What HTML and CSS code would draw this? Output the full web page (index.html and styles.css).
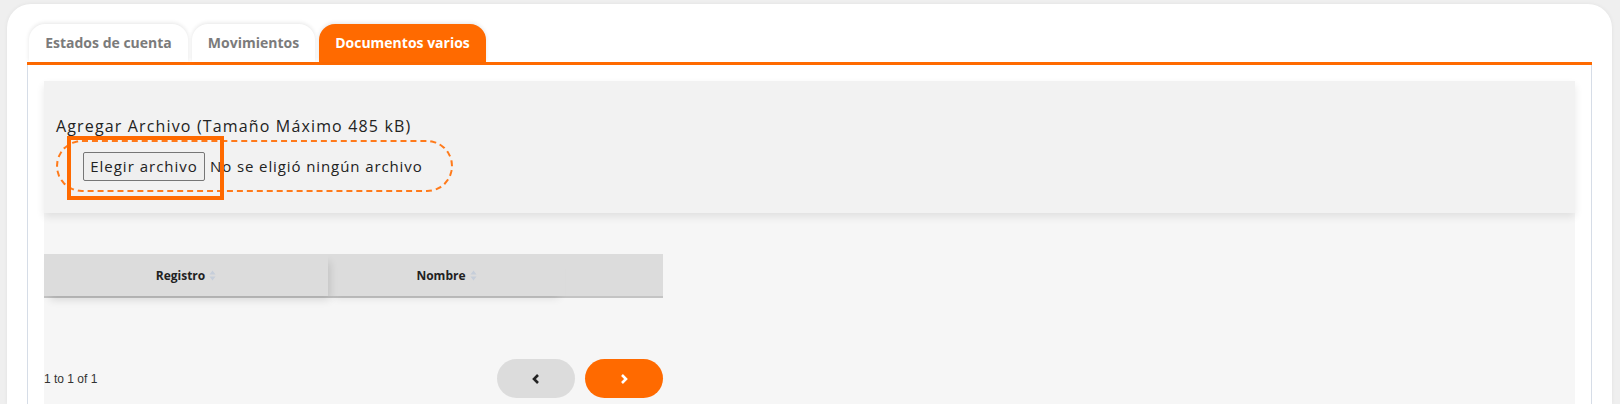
FILE: index.html
```html
<!DOCTYPE html>
<html lang="es">
<head>
<meta charset="utf-8">
<link rel="stylesheet" href="styles.css">
</head>
<body>
<div class="card">
  <div class="tabs">
    <div class="tab t1">Estados de cuenta</div>
    <div class="tab t2">Movimientos</div>
    <div class="tab t3 active">Documentos varios</div>
  </div>
  <div class="content">
    <div class="inner">
      <div class="upload">
        <div class="label">Agregar Archivo (Tamaño Máximo 485 kB)</div>
        <div class="drop">
          <span class="file-btn">Elegir archivo</span>
          <span class="file-name">No se eligió ningún archivo</span>
        </div>
        <div class="focus-box"></div>
      </div>
      <div class="table-area">
        <div class="thead">
          <div class="th th-reg">Registro <svg class="sort" width="7" height="11" viewBox="0 0 7 11"><path d="M3.5 0.5 L6.5 4.5 H0.5 Z M3.5 10.5 L6.5 6.5 H0.5 Z" fill="#c6ceda"/></svg></div>
          <div class="th th-nom">Nombre <svg class="sort" width="7" height="11" viewBox="0 0 7 11"><path d="M3.5 0.5 L6.5 4.5 H0.5 Z M3.5 10.5 L6.5 6.5 H0.5 Z" fill="#c6ceda"/></svg></div>
          <div class="th th-fill"></div>
        </div>
        <div class="pager">
          <span class="count">1 to 1 of 1</span>
          <div class="pbtns">
            <button class="pbtn prev"><svg width="8" height="10" viewBox="0 0 8 10"><path d="M6 1 L2 5 L6 9" fill="none" stroke="#222" stroke-width="2.6"/></svg></button>
            <button class="pbtn next"><svg width="8" height="10" viewBox="0 0 8 10"><path d="M2 1 L6 5 L2 9" fill="none" stroke="#fff" stroke-width="2.6"/></svg></button>
          </div>
        </div>
      </div>
    </div>
  </div>
</div>
</body>
</html>
```

FILE: styles.css
```css
html, body {
  margin: 0;
  padding: 0;
  background: #efefef;
  height: 404px;
  overflow: hidden;
}
.card {
  margin: 4px 8px 0 7px;
  background: #fff;
  border-radius: 24px 24px 0 0;
  padding: 20px 20px 0 20px;
  box-shadow: 0 0 4px rgba(0,0,0,0.06);
  height: 400px;
  box-sizing: border-box;
}
.tabs {
  display: flex;
  gap: 4px;
  padding-left: 2px;
  border-bottom: 3px solid #ff6a00;
  font-family: "Open Sans", sans-serif;
  font-weight: 700;
  font-size: 14px;
}
.tab {
  height: 38px;
  line-height: 38px;
  text-align: center;
  border-radius: 16px 16px 0 0;
  color: #7b7b7b;
  background: #fff;
  box-shadow: 0 -1px 4px rgba(0,0,0,0.10);
}
.t1 { width: 159px; }
.t2 { width: 123px; }
.t3 { width: 167px; }
.tab.active {
  background: #ff6a00;
  color: #fff;
}
.content {
  border-left: 1px solid #d6dde7;
  border-right: 1px solid #d6dde7;
  padding: 16px 16px 0 16px;
  height: 323px;
}
.inner {
  background: #f6f6f6;
  height: 323px;
}
.upload {
  position: relative;
  background: #f2f2f2;
  padding: 33px 12px 21px 12px;
  box-shadow: 0 4px 8px rgba(0,0,0,0.09);
  font-family: "Open Sans", sans-serif;
  color: #222;
}
.label {
  font-size: 16px;
  line-height: 24px;
  letter-spacing: 1.15px;
  margin-bottom: 2px;
}
.drop {
  width: 397px;
  height: 52px;
  box-sizing: border-box;
  border: 2px dashed #ff7a1a;
  border-radius: 26px;
  display: flex;
  align-items: center;
  padding-left: 25px;
}
.file-btn {
  display: inline-block;
  height: 29px;
  box-sizing: border-box;
  line-height: 27px;
  padding: 0 6px;
  border: 1px solid #767676;
  border-radius: 2px;
  background: #efefef;
  font-size: 15px;
  letter-spacing: 1px;
  width: 122px;
  text-align: center;
}
.file-name {
  font-size: 15px;
  margin-left: 5px;
  letter-spacing: 0.9px;
}
.focus-box {
  position: absolute;
  left: 23px;
  top: 55px;
  width: 157px;
  height: 64px;
  box-sizing: border-box;
  border: 4px solid #ff6a00;
}
.table-area {
  width: 619px;
  padding-top: 41px;
}
.thead {
  display: flex;
  height: 44px;
  background: #dcdcdc;
  border-bottom: 2px solid #c4c4c4;
  box-sizing: border-box;
  font-family: "Open Sans", sans-serif;
  font-weight: 700;
  font-size: 12px;
  color: #222;
}
.th {
  display: flex;
  align-items: center;
  justify-content: center;
  gap: 4px;
  background: #dcdcdc;
}
.th-reg {
  width: 284px;
  position: relative;
  z-index: 2;
  box-shadow: 4px 6px 8px -2px rgba(0,0,0,0.12);
}
.th-nom {
  width: 237px;
  position: relative;
  z-index: 1;
  box-shadow: 0 8px 8px -6px rgba(0,0,0,0.10);
}
.th-fill {
  flex: 1;
}
.sort {
  display: block;
}
.pager {
  display: flex;
  justify-content: space-between;
  align-items: center;
  margin-top: 61px;
}
.count {
  font-family: "Liberation Sans", Arial, sans-serif;
  font-size: 12px;
  color: #333;
}
.pbtns {
  display: flex;
  gap: 10px;
}
.pbtn {
  width: 78px;
  height: 39px;
  border: none;
  border-radius: 20px;
  display: flex;
  align-items: center;
  justify-content: center;
  padding: 0;
}
.pbtn.prev { background: #dcdcdc; }
.pbtn.next { background: #ff6a00; }
```
